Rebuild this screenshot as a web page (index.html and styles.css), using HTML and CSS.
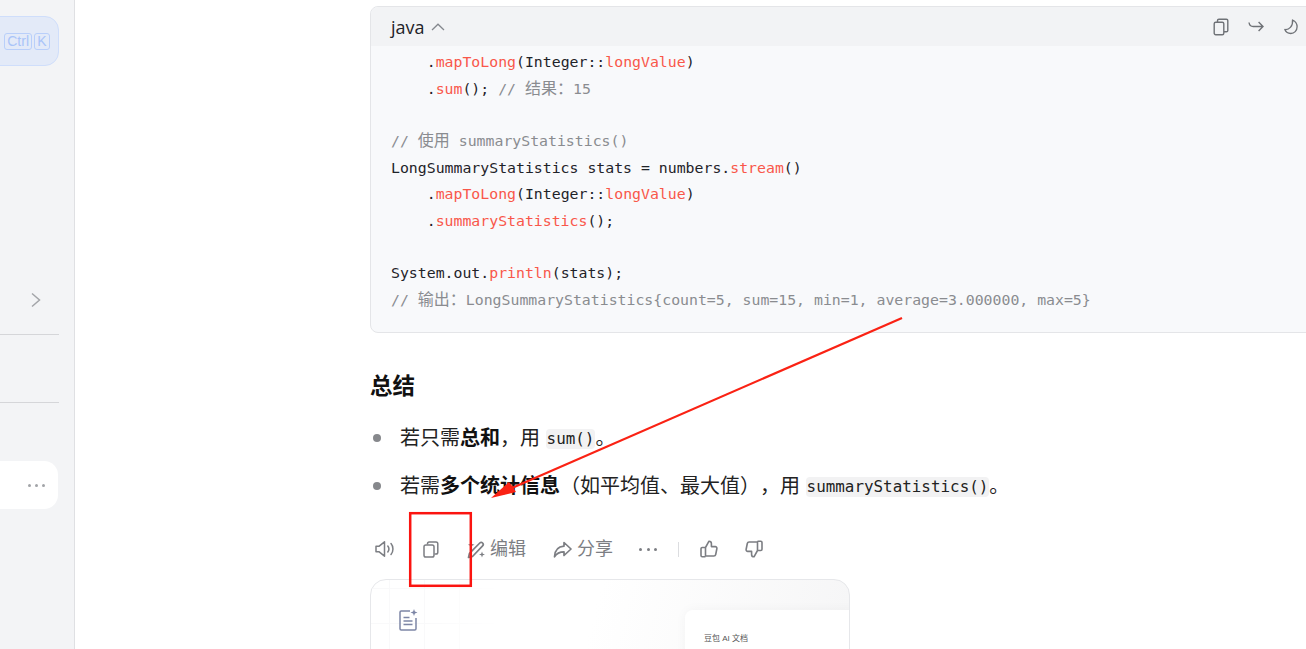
FILE: index.html
```html
<!DOCTYPE html>
<html lang="zh-CN">
<head>
<meta charset="utf-8">
<title>总结</title>
<link rel="stylesheet" href="styles.css">
</head>
<body>
<div class="page">
  <aside class="sidebar">
    <div class="search">
      <span class="key">Ctrl</span><span class="key key-k">K</span>
    </div>
    <div class="chevron-row">
      <svg class="chevron" viewBox="0 0 12 16" width="12" height="16"><path d="M2 1.5 9.5 8 2 14.5" fill="none" stroke="#a3a5a9" stroke-width="1.5"/></svg>
    </div>
    <div class="rule rule-one"></div>
    <div class="rule rule-two"></div>
    <div class="active-item"><span class="dots"><i></i><i></i><i></i></span></div>
  </aside>
  <main class="main">
    <section class="code-block">
      <header class="code-head">
        <div class="lang">java
          <svg viewBox="0 0 14 8" width="14" height="8"><path d="M1 7 7 1.2 13 7" fill="none" stroke="#85888e" stroke-width="1.3"/></svg>
        </div>
        <div class="code-tools">
          <svg viewBox="0 0 16 18" width="16" height="18"><rect x="1.2" y="4.2" width="9.6" height="12.6" rx="1.5" fill="none" stroke="#6f7277" stroke-width="1.4"/><path d="M4.5 4V2.6c0-.8.6-1.4 1.4-1.4h7.5c.8 0 1.4.6 1.4 1.4v9.8c0 .8-.6 1.4-1.4 1.4H11" fill="none" stroke="#6f7277" stroke-width="1.4"/></svg>
          <svg viewBox="0 0 16 12" width="16" height="12"><path d="M1 1.500c.4 2.600 2 4 4.200 4H15M10.600 1 15 5.500 10.600 10" fill="none" stroke="#6f7277" stroke-width="1.4"/></svg>
          <svg viewBox="0 0 16 16" width="16" height="16"><path d="M9.5 1c2.600 1.200 4.600 3.600 4.600 6.800 0 3.900-2.900 6.700-6.300 6.700-2.700 0-5-1.600-6-4 3.900.8 8.500-3.300 7.700-9.500Z" fill="none" stroke="#6f7277" stroke-width="1.3" stroke-linejoin="round"/></svg>
        </div>
      </header>
<pre class="code-body">    .<span class="fn">mapToLong</span>(Integer::<span class="fn">longValue</span>)
    .<span class="fn">sum</span>(); <span class="cm">// <span class="han">结果：</span>15</span>

<span class="cm">// <span class="han">使用</span> summaryStatistics()</span>
LongSummaryStatistics stats = numbers.<span class="fn">stream</span>()
    .<span class="fn">mapToLong</span>(Integer::<span class="fn">longValue</span>)
    .<span class="fn">summaryStatistics</span>();

System.out.<span class="fn">println</span>(stats);
<span class="cm">// <span class="han">输出：</span>LongSummaryStatistics{count=5, sum=15, min=1, average=3.000000, max=5}</span></pre>
    </section>

    <h3 class="title">总结</h3>
    <ul class="points">
      <li>若只需<strong>总和</strong>，用 <code>sum()</code>。</li>
      <li>若需<strong>多个统计信息</strong>（如平均值、最大值），用 <code>summaryStatistics()</code>。</li>
    </ul>

    <div class="actions">
      <svg class="a-speaker" viewBox="0 0 20 18" width="20" height="18"><path d="M1 6.200h3.200L9.500 1.800v14.400L4.200 11.800H1Z" fill="none" stroke="#7c7e83" stroke-width="1.500" stroke-linejoin="round"/><path d="M12.800 6c1.300 1.700 1.300 4.300 0 6M16 3.500c2.600 3 2.600 8 0 11" fill="none" stroke="#7c7e83" stroke-width="1.500" stroke-linecap="round"/></svg>
      <svg class="a-copy" viewBox="0 0 16 17" width="16" height="17"><rect x="1" y="4" width="10" height="12" rx="1.800" fill="none" stroke="#7c7e83" stroke-width="1.500"/><path d="M4.500 3.500V2.800C4.500 1.800 5.200 1 6.200 1h6.800c1 0 1.800.8 1.800 1.800v8.400c0 1-.8 1.800-1.800 1.800h-1.500" fill="none" stroke="#7c7e83" stroke-width="1.500"/></svg>
      <div class="a-edit">
        <svg viewBox="0 0 19 19" width="19" height="19"><path d="M1.500 17.500l1-4.200L12.800 3c.8-.8 2-.8 2.800 0 .8.800.8 2 0 2.800L5.500 16.500Z" fill="none" stroke="#7c7e83" stroke-width="1.700" stroke-linejoin="round"/><path d="M4.200 1.500l.9 2.400 2.400.9-2.400.9-.9 2.400-.9-2.400L.9 4.800l2.400-.9ZM15 11.500l.8 2.200 2.200.8-2.200.8-.8 2.200-.8-2.200-2.200-.8 2.200-.8Z" fill="#7c7e83"/></svg>
        <span>编辑</span>
      </div>
      <div class="a-share">
        <svg viewBox="0 0 19 17" width="19" height="17"><path d="M11 1.500 18 8l-7 6.500V10.800C6.500 10.800 3.500 12.500 1.500 15.800 1.800 10 5 5.600 11 5.200Z" fill="none" stroke="#7c7e83" stroke-width="1.700" stroke-linejoin="round"/></svg>
        <span>分享</span>
      </div>
      <span class="dots a-dots"><i></i><i></i><i></i></span>
      <span class="a-sep"></span>
      <svg class="a-up" viewBox="0 0 18 18" width="18" height="18"><path d="M5.500 7.500 9 1.200c1.400 0 2.400 1 2.400 2.400v3H15.300c1 0 1.800.9 1.600 1.900l-1.200 6c-.2.900-.9 1.500-1.800 1.500H5.500ZM5.500 7.500H2.200c-.6 0-1.200.5-1.200 1.200v6.900c0 .6.500 1.200 1.200 1.200h3.300" fill="none" stroke="#7c7e83" stroke-width="1.600" stroke-linejoin="round"/></svg>
      <svg class="a-down" viewBox="0 0 18 18" width="18" height="18"><path d="M12.500 10.500 9 16.800c-1.400 0-2.400-1-2.400-2.400v-3H2.700c-1 0-1.800-.9-1.600-1.900l1.200-6C2.500 2.600 3.200 2 4.100 2h8.400ZM12.500 10.500h3.300c.6 0 1.200-.5 1.200-1.200V2.400c0-.6-.5-1.200-1.200-1.200h-3.300" fill="none" stroke="#7c7e83" stroke-width="1.600" stroke-linejoin="round"/></svg>
    </div>

    <section class="doc-card">
      <svg class="doc-icon" viewBox="0 0 20 22" width="20" height="22"><path d="M12 2H3.200C2.500 2 2 2.500 2 3.200v16.600c0 .7.500 1.200 1.200 1.200h13.600c.7 0 1.200-.5 1.200-1.200V9" fill="none" stroke="#7d86a6" stroke-width="1.500"/><path d="M5.500 8.500h6M5.500 12h9M5.500 15.500h9" stroke="#7d86a6" stroke-width="1.500"/><path d="M16 0l.9 2.600 2.600.9-2.600.9L16 7l-.9-2.600-2.600-.9 2.600-.9Z" fill="#7d86a6"/></svg>
      <div class="doc-panel"><span class="doc-name">豆包 AI 文档</span></div>
    </section>
  </main>
  <svg class="markup" viewBox="0 0 1306 649" width="1306" height="649">
    <path d="M902 318 512 488" stroke="#fa2214" stroke-width="2.200" fill="none"/>
    <path d="M491 498 509 482 513 487 516 492Z" fill="#fa2214"/>
    <rect x="410.200" y="513.200" width="60.600" height="72.600" fill="none" stroke="#fb1410" stroke-width="2.500"/>
  </svg>
</div>
</body>
</html>
```
FILE: styles.css
```css
* { box-sizing: border-box; }
html, body { margin: 0; height: 100%; background: #fff; overflow: hidden; }
body {
  font-family: "Liberation Sans", "Noto Sans CJK SC", sans-serif;
  color: #222;
  text-spacing-trim: space-all;
}
.page {
  position: relative;
  display: flex;
  width: 1306px;
  height: 649px;
  overflow: hidden;
}

/* sidebar */
.sidebar {
  flex: 0 0 75px;
  width: 75px;
  min-width: 0;
  height: 100%;
  overflow: hidden;
  background: #f3f4f6;
  border-right: 1px solid #dfe0e3;
  padding-top: 16px;
  display: flex;
  flex-direction: column;
  align-items: flex-end;
}
.search {
  flex: none;
  width: 90px;
  height: 50px;
  margin-right: 15px;
  background: #e3eaf8;
  border: 1px solid #cfdefb;
  border-radius: 14px;
  display: flex;
  align-items: center;
  justify-content: flex-end;
  gap: 2px;
  padding-right: 8px;
}
.key {
  height: 17px;
  padding: 0 2px;
  border: 1px solid #b9cffa;
  border-radius: 3px;
  color: #a9c4f8;
  font-size: 14px;
  line-height: 15px;
}
.key-k { width: 16px; text-align: center; padding: 0; }
.chevron-row {
  margin-top: 226px;
  margin-right: 32px;
  height: 16px;
  width: 12px;
}
.chevron { display: block; }
.rule {
  flex: none;
  width: 59px;
  height: 1px;
  margin-right: 15px;
  background: #d5d6d9;
}
.rule-one { margin-top: 26px; }
.rule-two { margin-top: 67px; }
.active-item {
  flex: none;
  width: 80px;
  height: 48px;
  margin-top: 58px;
  margin-right: 16px;
  background: #fff;
  border-radius: 14px;
  display: flex;
  align-items: center;
  justify-content: flex-end;
  padding-right: 13px;
}
.dots { display: inline-flex; gap: 4px; }
.dots i {
  width: 3px;
  height: 3px;
  border-radius: 50%;
  background: #a2a4a8;
}

/* main column */
.main {
  flex: 1 1 auto;
  min-width: 0;
  padding: 6px 0 0 295px;
  overflow: hidden;
}
.code-block {
  width: 960px;
  height: 327px;
  border: 1px solid #e4e5e8;
  border-radius: 8px;
  background: #f8f9fb;
  overflow: hidden;
}
.code-head {
  height: 39px;
  background: #f2f3f5;
  display: flex;
  align-items: center;
  justify-content: space-between;
  padding: 0 0 0 20px;
}
.lang {
  display: flex;
  align-items: center;
  gap: 6px;
  font-family: "Open Sans", "Noto Sans", sans-serif;
  font-size: 18px;
  color: #1f2329;
}
.code-tools {
  width: 100px;
  margin-right: 10px;
  display: flex;
  align-items: center;
  justify-content: flex-start;
  gap: 19px;
  position: relative;
  left: -6px;
}
.code-body {
  margin: 0;
  padding: 3.100px 0 0 20px;
  font-family: "DejaVu Sans Mono", "Noto Sans CJK SC", monospace;
  font-size: 14.83px;
  line-height: 26.4px;
  color: #1f2329;
}
.fn { color: #f9574a; }
.cm { color: #8a8c90; }
.han { font-size: 16px; }

.title {
  margin: 39px 0 0;
  font-size: 22.5px;
  line-height: 30px;
  font-weight: 700;
  color: #111;
}
.points {
  margin: 20px 0 0;
  padding: 0 0 0 30px;
  font-size: 20px;
  line-height: 32px;
  list-style: none;
}
.points li {
  position: relative;
  margin-bottom: 16px;
}
.points li::before {
  content: "";
  position: absolute;
  left: -27px;
  top: 12px;
  width: 8px;
  height: 8px;
  border-radius: 50%;
  background: #86888c;
}
.points strong { color: #111; font-weight: 700; }
.points code {
  display: inline-block;
  vertical-align: 1px;
  font-family: "DejaVu Sans Mono", monospace;
  font-size: 15.900px;
  line-height: 20px;
  background: #f2f2f3;
  border-radius: 4px;
  padding: 0 1px;
}

/* actions */
.actions {
  display: flex;
  align-items: center;
  height: 28px;
  margin-top: 33px;
  padding-left: 5px;
  color: #7c7e83;
  font-size: 18px;
}
.a-speaker { margin-right: 28px; }
.a-copy { margin-right: 28px; }
.a-edit, .a-share { display: flex; align-items: center; }
.a-edit span, .a-share span { line-height: 24px; padding-bottom: 1px; }
.a-edit { gap: 4px; margin-right: 27px; }
.a-share { gap: 5px; margin-right: 26px; }
.a-dots { gap: 4.5px; margin-right: 21px; }
.a-dots i { background: #7c7e83; }
.a-sep { width: 1px; height: 15px; background: #dcdde0; margin-right: 21px; }
.a-up { margin-right: 27px; }

/* doc card */
.doc-card {
  position: relative;
  width: 480px;
  height: 140px;
  margin-top: 16px;
  border: 1px solid #e6e7ea;
  border-radius: 16px;
  padding: 29px 0 0 27px;
  background: linear-gradient(105deg, #fff 45%, #f5f5f6 100%);
  overflow: hidden;
}
.doc-card::before {
  content: "";
  position: absolute;
  left: 0;
  top: 0;
  width: 130px;
  height: 100%;
  background-image:
    linear-gradient(#f9f9fa 1px, transparent 1px),
    linear-gradient(90deg, #f9f9fa 1px, transparent 1px);
  background-size: 35px 35px;
  background-position: 18px 8px;
  -webkit-mask-image: linear-gradient(90deg, #000 40%, transparent);
  mask-image: linear-gradient(90deg, #000 40%, transparent);
}
.doc-icon { position: relative; display: block; }
.doc-panel {
  position: absolute;
  left: 314px;
  top: 30px;
  width: 180px;
  height: 120px;
  background: #fff;
  border-radius: 8px;
  padding: 23px 0 0 19px;
  box-shadow: 0 0 12px rgba(0, 0, 0, .04);
}
.doc-name { display: block; font-size: 8px; line-height: 12px; color: #555; }

/* red annotations drawn over the screenshot */
.markup {
  position: absolute;
  left: 0;
  top: 0;
  pointer-events: none;
}
```
